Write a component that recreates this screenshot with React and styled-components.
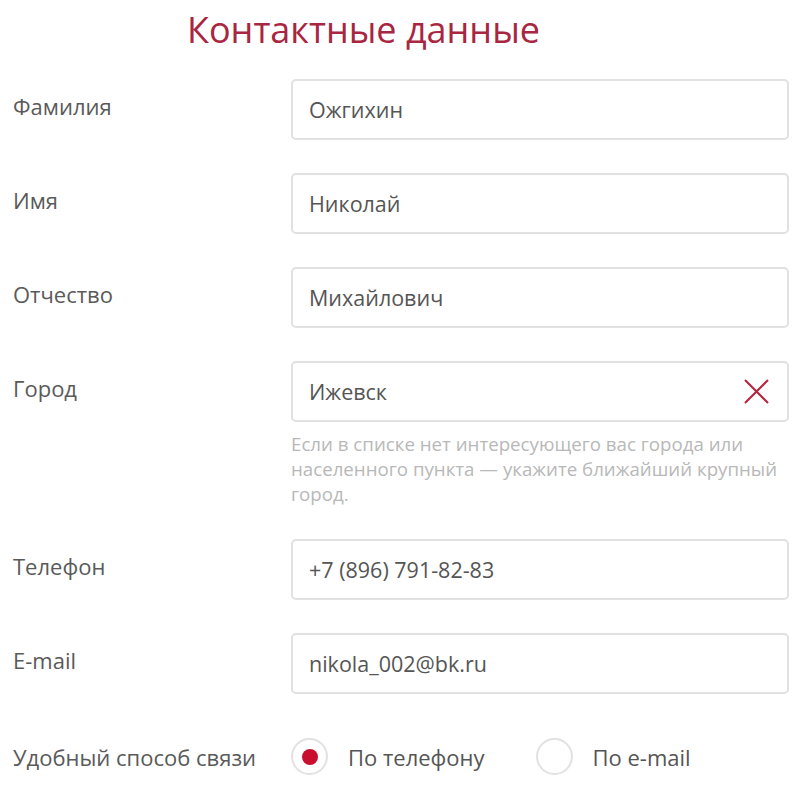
import React from "react";
import styled, { createGlobalStyle } from "styled-components";

const Global = createGlobalStyle`
  html, body { margin: 0; padding: 0; background: #fff; }
  body { font-family: "Open Sans", "Noto Sans", sans-serif; color: #555; }
  * { box-sizing: border-box; }
`;

const Page = styled.div`
  width: 798px;
  padding: 5px 9px 0 0;
`;

const Title = styled.h1`
  margin: 0 0 25px 187px;
  font-size: 36px;
  font-weight: 400;
  line-height: 49px;
  color: #a8263f;
`;

const Form = styled.div`
  display: flex;
  flex-direction: column;
  gap: 33px;
`;

const Row = styled.div`
  display: grid;
  grid-template-columns: 291px 1fr;
  align-items: ${(p) => (p.$center ? "center" : "start")};
`;

const Label = styled.div`
  padding-left: 13px;
  padding-top: ${(p) => (p.$center ? "0" : "12px")};
  font-size: 22px;
  line-height: 30px;
  color: #5a5a5a;
  white-space: nowrap;
`;

const Field = styled.div`
  display: flex;
  flex-direction: column;
`;

const InputBox = styled.div`
  height: 61px;
  border: 2px solid #e1e1e1;
  border-radius: 5px;
  display: flex;
  align-items: center;
  justify-content: space-between;
  padding: 0 16px 0 16px;
  font-size: 21.5px;
  color: #555;
`;

const Clear = styled.button`
  border: none;
  background: none;
  padding: 0;
  margin-right: 2px;
  width: 25px;
  height: 25px;
  display: flex;
  cursor: pointer;
`;

const Hint = styled.div`
  margin-top: 9px;
  font-size: 18.7px;
  line-height: 25px;
  color: #b8b8b8;
`;

const Radios = styled.div`
  display: flex;
  align-items: center;
`;

const RadioOption = styled.label`
  display: flex;
  align-items: center;
  gap: 20px;
  font-size: 22px;
  color: #555;
  margin-right: ${(p) => (p.$last ? "0" : "51px")};
`;

const RadioCircle = styled.span`
  width: 37px;
  height: 37px;
  border-radius: 50%;
  border: 2px solid #e2e2e2;
  display: flex;
  align-items: center;
  justify-content: center;
  &::after {
    content: "";
    width: 16px;
    height: 16px;
    border-radius: 50%;
    background: ${(p) => (p.$checked ? "#c8102e" : "transparent")};
  }
`;

const fields = [
  { label: "Фамилия", value: "Ожгихин" },
  { label: "Имя", value: "Николай" },
  { label: "Отчество", value: "Михайлович" },
  {
    label: "Город",
    value: "Ижевск",
    clear: true,
    hint:
      "Если в списке нет интересующего вас города или населенного пункта — укажите ближайший крупный город.",
  },
  { label: "Телефон", value: "+7 (896) 791-82-83" },
  { label: "E-mail", value: "nikola_002@bk.ru" },
];

export default function App() {
  return (
    <Page>
      <Global />
      <Title>Контактные данные</Title>
      <Form>
        {fields.map((f) => (
          <Row key={f.label}>
            <Label>{f.label}</Label>
            <Field>
              <InputBox>
                <span>{f.value}</span>
                {f.clear && (
                  <Clear aria-label="Очистить">
                    <svg width="25" height="25" viewBox="0 0 25 25">
                      <path
                        d="M1 1 L24 24 M24 1 L1 24"
                        stroke="#b8223c"
                        strokeWidth="2"
                        fill="none"
                      />
                    </svg>
                  </Clear>
                )}
              </InputBox>
              {f.hint && <Hint>{f.hint}</Hint>}
            </Field>
          </Row>
        ))}
        <Row $center style={{ marginTop: 11 }}>
          <Label $center>Удобный способ связи</Label>
          <Radios>
            <RadioOption>
              <RadioCircle $checked />
              По телефону
            </RadioOption>
            <RadioOption $last>
              <RadioCircle />
              По e-mail
            </RadioOption>
          </Radios>
        </Row>
      </Form>
    </Page>
  );
}
